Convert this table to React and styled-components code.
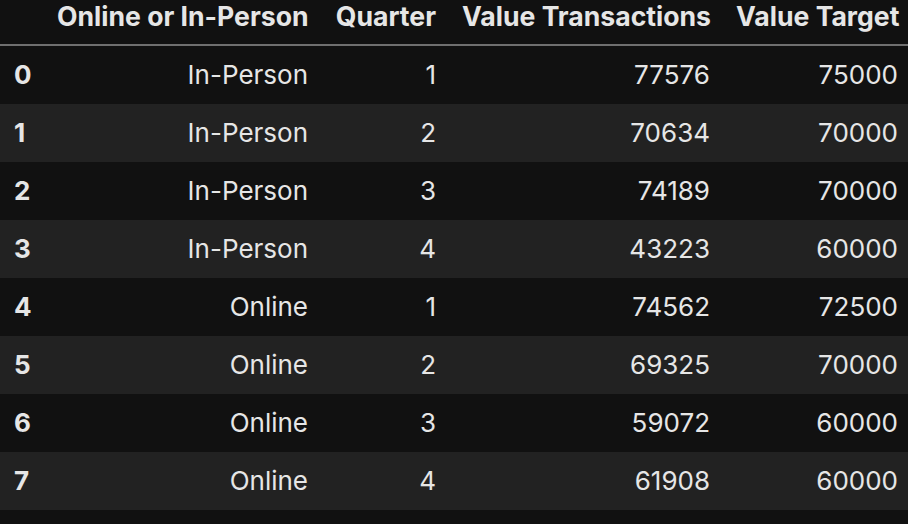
import styled, { createGlobalStyle } from 'styled-components'

const GlobalStyle = createGlobalStyle`
  html, body {
    margin: 0;
    padding: 0;
    background: #111111;
  }
  body {
    font-family: Inter, "Noto Sans", "Liberation Sans", sans-serif;
    overflow: hidden;
  }
`

const columns = '44px 277px 128px 274px 188px'

const Frame = styled.div`
  width: 908px;
  height: 524px;
  overflow: hidden;
  background: #111111;
  color: #e6e6e6;
  font-size: 26px;
`

const HeaderRow = styled.div`
  display: grid;
  grid-template-columns: ${columns};
  height: 46px;
  box-sizing: border-box;
  padding-top: 1px;
  border-bottom: 2px solid #6f6f6f;
  font-weight: 700;
  font-size: 26.6px;
`

const Row = styled.div`
  display: grid;
  grid-template-columns: ${columns};
  height: 58px;
  align-items: center;
  background: ${p => (p.$odd ? '#222222' : '#111111')};
`

const Cell = styled.div`
  padding: 0 13px;
  text-align: right;
  white-space: nowrap;
  line-height: 1.2;
`

const IndexCell = styled(Cell)`
  text-align: left;
  padding-left: 14px;
  font-weight: 700;
`

const headers = ['Online or In-Person', 'Quarter', 'Value Transactions', 'Value Target']

const rows = [
  ['In-Person', 1, 77576, 75000],
  ['In-Person', 2, 70634, 70000],
  ['In-Person', 3, 74189, 70000],
  ['In-Person', 4, 43223, 60000],
  ['Online', 1, 74562, 72500],
  ['Online', 2, 69325, 70000],
  ['Online', 3, 59072, 60000],
  ['Online', 4, 61908, 60000],
]

const App = () => (
  <Frame>
    <GlobalStyle />
    <HeaderRow>
      <IndexCell />
      {headers.map(h => (
        <Cell key={h}>{h}</Cell>
      ))}
    </HeaderRow>
    {rows.map((r, i) => (
      <Row key={i} $odd={i % 2 === 1}>
        <IndexCell>{i}</IndexCell>
        {r.map((v, j) => (
          <Cell key={j}>{v}</Cell>
        ))}
      </Row>
    ))}
  </Frame>
)

export default App
